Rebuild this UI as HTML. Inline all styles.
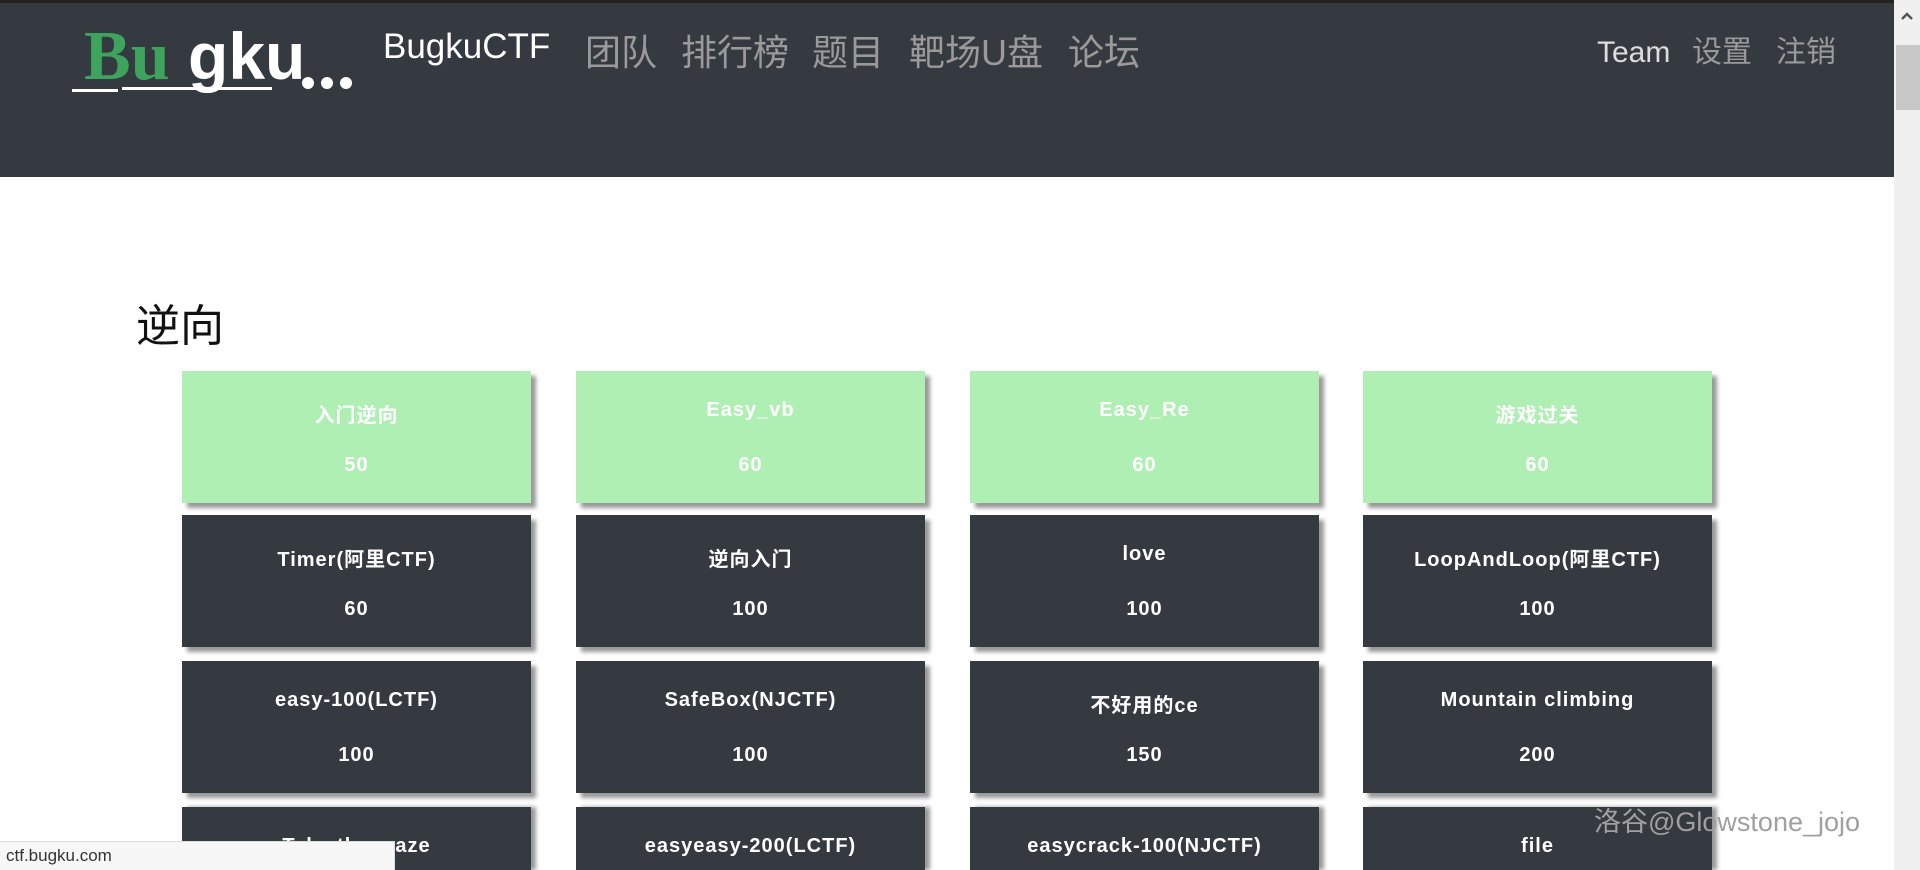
<!DOCTYPE html>
<html><head><meta charset="utf-8"><style>
*{margin:0;padding:0;box-sizing:border-box}
html,body{width:1920px;height:870px;overflow:hidden}
body{background:#fff;position:relative;font-family:"Liberation Sans","Noto Sans CJK SC",sans-serif}
.hdr{position:absolute;left:0;top:0;width:1894px;height:177px;background:#343a40;border-top:3px solid #222}
.nav{position:absolute;top:21px;font-size:36px;color:#9a9a9a;white-space:nowrap}
.nr{top:24px;font-size:30px}
.w{color:#fff}
.sb{position:absolute;left:1894px;top:0;width:26px;height:870px;background:#f0f0f0}
.thumb{position:absolute;left:1896px;top:45px;width:24px;height:65px;background:#c8c8c8}
h1{position:absolute;left:136px;top:290px;font-size:44px;font-weight:normal;color:#111}
.card{position:absolute;width:349px;height:132px;background:#343a40;color:#fff;box-shadow:5px 5px 4px #999;text-align:center;font-weight:bold;font-size:20px;letter-spacing:1px;overflow:hidden}
.card.g{background:#b0efb3}
.card .t{position:absolute;left:0;right:0;top:28px}
.card .s{position:absolute;left:0;right:0;top:83px}
.status{position:absolute;left:0;top:841px;width:395px;height:29px;background:#f7f7f7;border-top:1px solid #ddd;border-right:1px solid #ddd;font-size:17px;color:#333;padding:4px 6px}
.wm{position:absolute;left:1594px;top:800px;font-size:27px;color:#a0a0a0;white-space:nowrap}
</style></head><body>
<div class="hdr">
<svg style="position:absolute;left:70px;top:14px" width="285" height="80" viewBox="0 0 285 80">
<text x="14" y="62" font-size="70" font-weight="bold" fill="#3da35d" font-family="Liberation Serif">Bu</text>
<text x="118" y="62" font-size="66" font-weight="bold" fill="#fff" font-family="Liberation Sans">gku</text>
<rect x="2" y="72" width="46" height="3" fill="#fff"/><rect x="52" y="70" width="150" height="3" fill="#fff"/>
<circle cx="238" cy="66" r="6" fill="#fff"/><circle cx="257" cy="66" r="6" fill="#fff"/><circle cx="276" cy="66" r="6" fill="#fff"/>
</svg>
<div class="nav w" style="left:383px;top:24px;font-size:35px">BugkuCTF</div>
<div class="nav" style="left:585px">团队</div>
<div class="nav" style="left:681px">排行榜</div>
<div class="nav" style="left:812px">题目</div>
<div class="nav" style="left:909px">靶场U盘</div>
<div class="nav" style="left:1068px">论坛</div>
<div class="nav nr" style="left:1597px;color:#ddd;top:33px">Team</div>
<div class="nav nr" style="left:1692px">设置</div>
<div class="nav nr" style="left:1776px">注销</div>
</div>
<div class="sb"></div><div class="thumb"></div>
<svg style="position:absolute;left:1900px;top:10px" width="14" height="12"><path d="M2 9 L7 4 L12 9" stroke="#555" stroke-width="2.5" fill="none"/></svg>
<h1>逆向</h1>
<div class="card g" style="left:182px;top:371px"><div class="t">入门逆向</div><div class="s">50</div></div>
<div class="card g" style="left:576px;top:371px"><div class="t">Easy_vb</div><div class="s">60</div></div>
<div class="card g" style="left:970px;top:371px"><div class="t">Easy_Re</div><div class="s">60</div></div>
<div class="card g" style="left:1363px;top:371px"><div class="t">游戏过关</div><div class="s">60</div></div>
<div class="card" style="left:182px;top:515px"><div class="t">Timer(阿里CTF)</div><div class="s">60</div></div>
<div class="card" style="left:576px;top:515px"><div class="t">逆向入门</div><div class="s">100</div></div>
<div class="card" style="left:970px;top:515px"><div class="t">love</div><div class="s">100</div></div>
<div class="card" style="left:1363px;top:515px"><div class="t">LoopAndLoop(阿里CTF)</div><div class="s">100</div></div>
<div class="card" style="left:182px;top:661px"><div class="t">easy-100(LCTF)</div><div class="s">100</div></div>
<div class="card" style="left:576px;top:661px"><div class="t">SafeBox(NJCTF)</div><div class="s">100</div></div>
<div class="card" style="left:970px;top:661px"><div class="t">不好用的ce</div><div class="s">150</div></div>
<div class="card" style="left:1363px;top:661px"><div class="t">Mountain climbing</div><div class="s">200</div></div>
<div class="card" style="left:182px;top:807px;height:63px;box-shadow:5px 0 4px #999"><div class="t">Take the maze</div></div>
<div class="card" style="left:576px;top:807px;height:63px;box-shadow:5px 0 4px #999"><div class="t">easyeasy-200(LCTF)</div></div>
<div class="card" style="left:970px;top:807px;height:63px;box-shadow:5px 0 4px #999"><div class="t">easycrack-100(NJCTF)</div></div>
<div class="card" style="left:1363px;top:807px;height:63px;box-shadow:5px 0 4px #999"><div class="t">file</div></div>
<div class="status">ctf.bugku.com</div>
<div class="wm">洛谷@Glowstone_jojo</div>
</body></html>
